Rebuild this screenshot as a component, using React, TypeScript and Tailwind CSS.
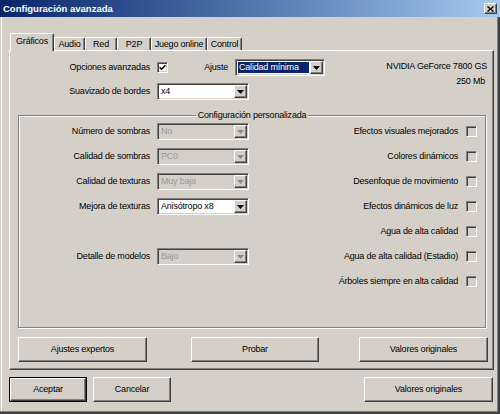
import type { ReactNode } from 'react';

const raised =
  'border border-t-white border-l-white border-r-[#404040] border-b-[#404040] shadow-[inset_-1px_-1px_0_#808080]';
const sunken =
  'border border-t-[#808080] border-l-[#808080] border-r-white border-b-white shadow-[inset_1px_1px_0_#404040,inset_-1px_-1px_0_#d4d0c8]';

function Arrow({ disabled }: { disabled?: boolean }) {
  return (
    <svg width="7" height="4" viewBox="0 0 7 4">
      <path d="M0 0h7L3.5 4z" fill={disabled ? '#8c8a85' : '#000'} />
    </svg>
  );
}

function Select({
  value,
  className,
  disabled,
  highlighted,
}: {
  value: string;
  className: string;
  disabled?: boolean;
  highlighted?: boolean;
}) {
  return (
    <div className={`${sunken} ${className} flex h-[17px] p-[1px] ${disabled ? 'bg-[#d4d0c8]' : 'bg-white'}`}>
      <div className="flex-1 flex items-center p-[1px]">
        <div
          className={`flex-1 h-full flex items-center pl-[1px] ${
            highlighted ? 'bg-[#0a246a] text-white' : disabled ? 'text-[#9a9893]' : 'text-black'
          }`}
        >
          {value}
        </div>
      </div>
      <div className={`${raised} w-[13px] h-full bg-[#d4d0c8] flex items-center justify-center`}>
        <Arrow disabled={disabled} />
      </div>
    </div>
  );
}

function Check({ checked, disabled }: { checked?: boolean; disabled?: boolean }) {
  return (
    <div
      className={`${sunken} w-[11px] h-[11px] flex items-center justify-center ${
        disabled ? 'bg-[#d4d0c8]' : 'bg-white'
      }`}
    >
      {checked && (
        <svg width="7" height="7" viewBox="0 0 7 7">
          <path d="M0.6 3.2L2.6 5.2L6.4 1.2" stroke="#000" strokeWidth="1.5" fill="none" />
        </svg>
      )}
    </div>
  );
}

function Btn({ children, className, isDefault }: { children: ReactNode; className: string; isDefault?: boolean }) {
  if (isDefault) {
    return (
      <div className={`${className} h-[25px] border border-black flex`}>
        <div className={`${raised} flex-1 flex items-center justify-center`}>{children}</div>
      </div>
    );
  }
  return <div className={`${raised} ${className} h-[25px] flex items-center justify-center`}>{children}</div>;
}

const tabs = [
  { label: 'Audio', w: 'w-[31px]' },
  { label: 'Red', w: 'w-[32px]' },
  { label: 'P2P', w: 'w-[34px]' },
  { label: 'Juego online', w: 'w-[56px]' },
  { label: 'Control', w: 'w-[35px]' },
];

const rows: { left?: { label: string; value: string; enabled?: boolean }; right: string }[] = [
  { left: { label: 'Número de sombras', value: 'No' }, right: 'Efectos visuales mejorados' },
  { left: { label: 'Calidad de sombras', value: 'PC0' }, right: 'Colores dinámicos' },
  { left: { label: 'Calidad de texturas', value: 'Muy baja' }, right: 'Desenfoque de movimiento' },
  { left: { label: 'Mejora de texturas', value: 'Anisótropo x8', enabled: true }, right: 'Efectos dinámicos de luz' },
  { right: 'Agua de alta calidad' },
  { left: { label: 'Detalle de modelos', value: 'Bajo' }, right: 'Agua de alta calidad (Estadio)' },
  { right: 'Árboles siempre en alta calidad' },
];

export default function App() {
  return (
    <div className="w-[500px] h-[414px] bg-[#d4d0c8] flex flex-col overflow-hidden font-['Liberation_Sans',Arial,sans-serif] text-[9px] tracking-[-0.2px] text-black leading-none">
      {/* Title bar */}
      <div className="h-[17px] flex items-center justify-between pl-[3px] pr-[3px] bg-gradient-to-r from-[#0a246a] to-[#a6caf0]">
        <span className="text-white font-bold text-[9.5px] tracking-normal">Configuración avanzada</span>
        <div className={`${raised} w-[13px] h-[11px] bg-[#d4d0c8] flex items-center justify-center`}>
          <svg width="7" height="6" viewBox="0 0 7 6">
            <path d="M0.5 0.5L6.5 5.5M6.5 0.5L0.5 5.5" stroke="#000" strokeWidth="1.4" />
          </svg>
        </div>
      </div>

      {/* Body */}
      <div className="flex-1 flex flex-col shadow-[inset_-2px_-2px_0_#404040,inset_-3px_-3px_0_#808080,inset_1px_0_0_#d4d0c8,inset_2px_0_0_#ffffff]">
        {/* Tabs */}
        <div className="mt-[16px] h-[17px] flex items-end pl-[10px]">
          <div className="relative z-10 -mb-[1px] w-[44px] h-[18px] bg-[#d4d0c8] border-t border-l border-r border-t-white border-l-white border-r-[#404040] rounded-t-[2px] shadow-[inset_-1px_0_0_#808080] flex items-center justify-center pb-[2px]">
            Gráficos
          </div>
          {tabs.map((t) => (
            <div
              key={t.label}
              className={`${t.w} h-[13px] border-t border-l border-r border-t-white border-l-white border-r-[#404040] rounded-t-[2px] shadow-[inset_-1px_0_0_#808080] flex items-center justify-center`}
            >
              {t.label}
            </div>
          ))}
        </div>

        {/* Tab panel */}
        <div className={`${raised} ml-[9px] w-[485px] h-[320px] flex flex-col`}>
          <div className="flex pt-[8px] pr-[6px]">
            <div className="flex flex-col">
              <div className="flex items-center h-[17px]">
                <div className="w-[140px] text-right">Opciones avanzadas</div>
                <div className="ml-[7px]">
                  <Check checked />
                </div>
                <div className="w-[60px] text-right">Ajuste</div>
                <Select value="Calidad mínima" className="ml-[7px] w-[90px]" highlighted />
              </div>
              <div className="flex items-center h-[17px] mt-[7px]">
                <div className="w-[140px] text-right">Suavizado de bordes</div>
                <Select value="x4" className="ml-[7px] w-[92px]" />
              </div>
            </div>
            <div className="ml-auto flex flex-col items-end leading-[15px]">
              <div>NVIDIA GeForce 7800 GS</div>
              <div className="pr-[2px]">250 Mb</div>
            </div>
          </div>

          {/* Group box */}
          <div className="mt-[15px] ml-[8px] w-[468px] h-[213px] border border-[#808080] shadow-[inset_1px_1px_0_#ffffff,1px_1px_0_#ffffff] flex flex-col">
            <div className="-mt-[7px] mb-[1px] h-[13px] self-center px-[2px] bg-[#d4d0c8] flex items-center">
              Configuración personalizada
            </div>
            <div className="flex flex-col gap-[8px]">
              {rows.map((r) => (
                <div key={r.right} className="flex items-center h-[17px]">
                  <div className="w-[230px] flex items-center">
                    {r.left && (
                      <>
                        <div className="w-[131px] text-right">{r.left.label}</div>
                        <Select value={r.left.value} className="ml-[7px] w-[92px]" disabled={!r.left.enabled} />
                      </>
                    )}
                  </div>
                  <div className="flex-1 flex items-center justify-end gap-[8px] pr-[8px]">
                    <span>{r.right}</span>
                    <Check disabled />
                  </div>
                </div>
              ))}
            </div>
          </div>

          {/* Panel buttons */}
          <div className="flex mt-[9px]">
            <Btn className="ml-[8px] w-[129px]">Ajustes expertos</Btn>
            <Btn className="ml-[44px] w-[128px]">Probar</Btn>
            <Btn className="ml-[40px] w-[129px]">Valores originales</Btn>
          </div>
        </div>

        {/* Dialog buttons */}
        <div className="flex mt-[7px] pl-[9px]">
          <Btn className="w-[78px]" isDefault>
            Aceptar
          </Btn>
          <Btn className="ml-[6px] w-[78px]">Cancelar</Btn>
          <Btn className="ml-auto mr-[7px] w-[129px]">Valores originales</Btn>
        </div>
      </div>
    </div>
  );
}
